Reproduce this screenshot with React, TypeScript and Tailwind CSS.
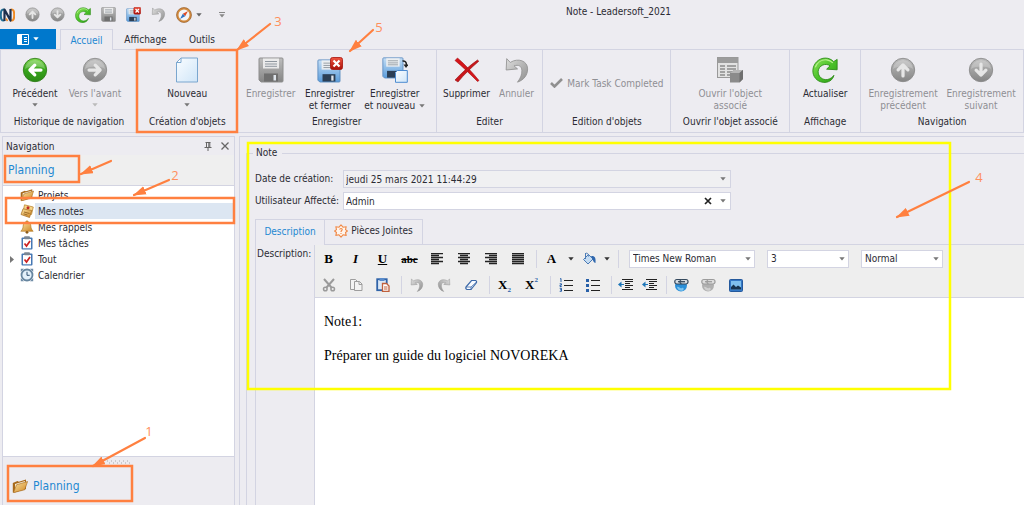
import React from "react";

type IconProps = { className?: string };

/* ---------- shared gradients ---------- */
function Gradients() {
  return (
    <svg className="absolute size-0" aria-hidden="true">
      <defs>
        <linearGradient id="green" x1="0" y1="0" x2="0" y2="1">
          <stop offset="0" stopColor="#86d957" />
          <stop offset="0.5" stopColor="#37a51c" />
          <stop offset="1" stopColor="#2b8a14" />
        </linearGradient>
        <linearGradient id="lime" x1="0" y1="0" x2="1" y2="1">
          <stop offset="0" stopColor="#8ee35c" />
          <stop offset="0.5" stopColor="#4cc32a" />
          <stop offset="1" stopColor="#2b9a14" />
        </linearGradient>
        <linearGradient id="grey" x1="0" y1="0" x2="0" y2="1">
          <stop offset="0" stopColor="#bdbdbd" />
          <stop offset="1" stopColor="#858585" />
        </linearGradient>
        <linearGradient id="silver" x1="0" y1="0" x2="1" y2="1">
          <stop offset="0" stopColor="#dedede" />
          <stop offset="1" stopColor="#8e8e8e" />
        </linearGradient>
        <linearGradient id="sky" x1="0" y1="0" x2="0" y2="1">
          <stop offset="0" stopColor="#c4def5" />
          <stop offset="1" stopColor="#5a9cdb" />
        </linearGradient>
        <linearGradient id="paper" x1="0" y1="0" x2="1" y2="1">
          <stop offset="0" stopColor="#fafdff" />
          <stop offset="1" stopColor="#cfe5f8" />
        </linearGradient>
        <linearGradient id="red" x1="0" y1="0" x2="0" y2="1">
          <stop offset="0" stopColor="#f0533f" />
          <stop offset="1" stopColor="#a80f08" />
        </linearGradient>
        <linearGradient id="gold" x1="0" y1="0" x2="1" y2="1">
          <stop offset="0" stopColor="#fbe3a2" />
          <stop offset="1" stopColor="#cf8420" />
        </linearGradient>
      </defs>
    </svg>
  );
}

/* ---------- icons ---------- */
const arrowTurns = { right: "rotate(0 12 12)", down: "rotate(90 12 12)", left: "rotate(180 12 12)", up: "rotate(270 12 12)" };

function CircleArrow({ dir, green, className = "size-[26px]" }: IconProps & { dir: keyof typeof arrowTurns; green?: boolean }) {
  return (
    <svg viewBox="0 0 24 24" className={className}>
      <circle cx="12" cy="12" r="10.8" fill={green ? "url(#green)" : "url(#grey)"} stroke={green ? "#2e7d17" : "#8a8a8a"} strokeWidth="0.8" />
      <path d="M2.6 11a9.5 9.5 0 0 1 18.8 0c-5-3-13-3-18.8 0z" fill="#fff" opacity="0.22" />
      <path
        d="M6.500 12h10M12.200 7.500 16.700 12l-4.500 4.500"
        transform={arrowTurns[dir]}
        fill="none"
        stroke={green ? "#fff" : "#e6e6e6"}
        strokeWidth="3"
        strokeLinecap="round"
        strokeLinejoin="round"
      />
    </svg>
  );
}

function RefreshIcon({ className = "size-[26px]" }: IconProps) {
  return (
    <svg viewBox="0 0 24 24" className={className}>
      <path
        d="M23.2 2.2v9.6l-9.7-.6 3.2-3.1C12.6 5.200 6.200 7.600 5.700 13.200c-.3 4.700 3.900 8.600 8.900 7.500 2.300-.5 4.200-1.900 5.600-3.800-.9 4.500-5.300 7-9.900 6.500C4.500 22.700.5 18 .8 12.300 1.200 5.900 6.300 1 12.300 1c3 0 5.700 1.200 7.700 3.300z"
        fill="url(#lime)"
        stroke="#2a8a14"
        strokeWidth="0.8"
      />
      <path d="M3 9.500C5 4.500 9.500 2.300 13.500 2.600c2.200.2 4.200 1.200 5.800 2.900" fill="none" stroke="#b7f08e" strokeWidth="1.100" />
    </svg>
  );
}

function Floppy({ grey, badge, className = "size-[26px]" }: IconProps & { grey?: boolean; badge?: "close" | "new" }) {
  const body = grey ? "url(#grey)" : "url(#sky)";
  const dark = grey ? "#6f6f6f" : "#2c3f55";
  const edge = grey ? "#8f8f8f" : "#5a8cc0";
  return (
    <svg viewBox="0 0 26 26" className={className}>
      {badge === "new" ? (
        <g transform="scale(0.84)">
          <FloppyBody body={body} dark={dark} edge={edge} />
        </g>
      ) : (
        <g transform={badge === "close" ? "translate(0 2) scale(0.92)" : undefined}>
          <FloppyBody body={body} dark={dark} edge={edge} />
        </g>
      )}
      {badge === "close" && (
        <g>
          <rect x="13.500" y="0.500" width="12" height="12" rx="2" fill="url(#red)" stroke="#a6120a" strokeWidth="0.8" />
          <path d="M16.500 3.500l6 6M22.500 3.500l-6 6" stroke="#fff" strokeWidth="2.200" />
        </g>
      )}
      {badge === "new" && (
        <g>
          <path d="M15.500 13.500h9.800v11.800H13.500V15.500z" fill="url(#paper)" stroke="#4d8bd0" />
          <path d="M20.500 4c2.500-.2 4 .8 3.900 4" fill="none" stroke="#222" strokeWidth="1.600" />
          <path d="M21.500 7.500h5l-2.500 3.500z" fill="#222" />
        </g>
      )}
    </svg>
  );
}

function FloppyBody({ body, dark, edge }: { body: string; dark: string; edge: string }) {
  return (
    <g>
      <path d="M2 1h22a1 1 0 0 1 1 1v22a1 1 0 0 1-1 1H3l-2-2V2a1 1 0 0 1 1-1z" fill={body} stroke={edge} />
      <rect x="5" y="1.500" width="16" height="10" fill="#f1f1f1" opacity="0.9" />
      <path d="M7 4.500h12M7 7h12M7 9.300h12" stroke="#8f979f" strokeWidth="1" />
      <rect x="6" y="16.500" width="14" height="8" fill={dark} />
      <rect x="15.500" y="18" width="2.500" height="5.500" fill="#dfe5ec" />
    </g>
  );
}

function UndoIcon({ className = "size-[26px]", flip }: IconProps & { flip?: boolean }) {
  return (
    <svg viewBox="0 0 24 24" className={className}>
      <path
        transform={flip ? "matrix(-1 0 0 1 24 0)" : undefined}
        d="M2.500 1.500 2 12l10.500-1-3.200-2.800c4-1.400 7 .2 7.200 4 .2 3.700-1 7-4 11 6-2 9.300-6.700 9.300-12.200C21.800 3.500 13 .5 5.800 5z"
        fill="url(#silver)"
        stroke="#929292"
        strokeWidth="0.8"
      />
    </svg>
  );
}

function LogoIcon() {
  return (
    <svg viewBox="0 0 15 14" className="h-[14px] w-[15px]">
      <path d="M4.500 1.700C1.500 1 .8 3 .8 7s.7 6 3.700 5.300" fill="none" stroke="#1f6f96" strokeWidth="2" />
      <path d="M10.500 1.700c3-.7 3.700 1.300 3.700 5.300s-.7 6-3.700 5.300" fill="none" stroke="#f08a24" strokeWidth="2" />
      <path d="M4.500 13V1.500L10.500 12.500V1" fill="none" stroke="#1b2f4d" strokeWidth="2.200" strokeLinejoin="round" />
      <path d="M7.500 13 6 10.500" stroke="#f08a24" strokeWidth="1.500" />
    </svg>
  );
}

function CompassIcon() {
  return (
    <svg viewBox="0 0 16 16" className="size-[16px]">
      <circle cx="8" cy="8" r="6.500" fill="#f3f5f8" stroke="#d28a3e" strokeWidth="2" />
      <circle cx="8" cy="8" r="7.500" fill="none" stroke="#8c531e" strokeWidth="0.6" />
      <path d="M12 4 9.200 9.200 6.800 6.800z" fill="#df4d26" />
      <path d="M4 12l2.800-5.200 2.400 2.400z" fill="#2f74c4" />
    </svg>
  );
}

function NewPageIcon() {
  return (
    <svg viewBox="0 0 24 26" className="h-[26px] w-[24px]">
      <path d="M6 1h16.500v24h-21V5.500z" fill="url(#paper)" stroke="#7aa6cf" />
      <path d="M1.500 5.500H6V1z" fill="#fff" stroke="#7aa6cf" />
    </svg>
  );
}

function DeleteIcon() {
  return (
    <svg viewBox="0 0 26 26" className="size-[26px]">
      <path d="M1 3.500 3.500 1C11 7.500 18 15 25 23.500l-1.500 1C16 17 9 10 1 3.500z" fill="#d4141a" stroke="#a60f12" strokeWidth="0.6" />
      <path d="M23.500 3l1.300 1.200C17 11 10 17.500 4 25L1 23C8 15.500 15 9 23.500 3z" fill="#c9161b" stroke="#941013" strokeWidth="0.6" />
    </svg>
  );
}

function LinkedObjectIcon() {
  return (
    <svg viewBox="0 0 26 26" className="size-[26px]">
      <rect x="0.500" y="0.500" width="20.500" height="20" fill="#e2e2e2" stroke="#999" />
      <rect x="1" y="1" width="20" height="5" fill="#9c9c9c" />
      <path d="M3 9h5M10 9h9M3 12h5M10 12h9M3 15h5M10 15h9M3 18h5M10 18h4" stroke="#8c8c8c" strokeWidth="1.400" />
      <path d="M13 16l4-3h9v9l-3.500 3.500H13z" fill="#8b8b8b" />
      <path d="M13 16l4-3h9l-3.500 3z" fill="#b7b7b7" />
      <path d="M26 13v9l-3.500 3.500V16z" fill="#6f6f6f" />
    </svg>
  );
}

function FolderIcon({ className = "size-[14px]" }: IconProps) {
  return (
    <svg viewBox="0 0 16 14" className={className}>
      <path d="M.8 4 5.500 2l1.300.8L14 .5V10L3 13.500H.8z" fill="#a86a1c" />
      <path d="M3 5 13 2v7L3 12z" fill="#f5ecd6" />
      <path d="M4.500 5.800 15.600 2.500 12.700 10.800 1.500 13.600z" fill="url(#gold)" stroke="#a8691e" strokeWidth="0.6" />
    </svg>
  );
}

function NoteIcon() {
  return (
    <svg viewBox="0 0 14 14" className="size-[14px]">
      <path d="M4.500.8 13.300 3 11.500 10.500 3 8z" fill="#f7d588" stroke="#b27c28" strokeWidth="0.7" />
      <path d="M3 4.800 11.800 6.500 9.500 13.500 1 10.500z" fill="url(#gold)" stroke="#a36c20" strokeWidth="0.7" />
      <path d="M4 8l5.500 1.500M3.500 9.800l4 1.200" stroke="#8b5a1b" strokeWidth="0.8" />
      <circle cx="8" cy="3.800" r="1.500" fill="#bf2a22" />
    </svg>
  );
}

function BellIcon() {
  return (
    <svg viewBox="0 0 14 14" className="size-[14px]">
      <circle cx="7" cy="1.800" r="1.300" fill="#c98a2a" />
      <path d="M7 1.800c3 0 3.700 2.200 3.900 4.700.1 2 .8 3.300 2.300 4.700H.8c1.500-1.400 2.200-2.700 2.300-4.700.2-2.500.9-4.700 3.900-4.700z" fill="url(#gold)" stroke="#b27a22" strokeWidth="0.7" />
      <circle cx="7" cy="12.300" r="1.400" fill="#8d5a16" />
    </svg>
  );
}

function TaskIcon() {
  return (
    <svg viewBox="0 0 14 14" className="size-[14px]">
      <rect x="1.500" y="1.500" width="11" height="12" rx="1" fill="#4678b4" />
      <rect x="3" y="3" width="8" height="9.300" fill="#fff" />
      <rect x="4" y="0.300" width="6" height="3" rx="1" fill="#7b8794" />
      <path d="M4.500 7.500 6.500 10 10 5" fill="none" stroke="#cc2222" strokeWidth="1.700" />
    </svg>
  );
}

function ClockIcon() {
  return (
    <svg viewBox="0 0 14 14" className="size-[14px]">
      <path d="M.8 4V.8H4zM13.200 4V.8H10zM.8 10v3.200H4zM13.200 10v3.200H10z" fill="#6f8ca6" />
      <circle cx="7" cy="7" r="5.500" fill="#e3f0fa" stroke="#66859f" strokeWidth="1.800" />
      <path d="M7 3.800V7.300h2.700" fill="none" stroke="#2d4f70" />
    </svg>
  );
}

function GearAlertIcon() {
  return (
    <svg viewBox="0 0 14 14" className="size-[14px]">
      <path d="M7 .9 9 3.200l3.200-.5-.7 2.900L13.400 7l-1.900 1.500.7 2.900-3.200-.6L7 13.100l-2-2.300-3.200.6.7-2.900L.6 7l1.900-1.400-.7-2.900 3.200.5z" fill="#fff5ed" stroke="#f08a48" strokeWidth="1.100" strokeLinejoin="round" />
      <path d="M5.700 5.600c.2-1.500 2.700-1.300 2.500.1C8.100 6.500 7 6.600 7 7.900M7 9v1" fill="none" stroke="#f08a48" strokeWidth="1.100" />
    </svg>
  );
}

function Caret({ className = "text-[#666]" }: IconProps) {
  return (
    <svg viewBox="0 0 6 4" className={"h-[4px] w-[6px] shrink-0 " + className}>
      <path d="M.3.300h5.400L3 3.500z" fill="currentColor" />
    </svg>
  );
}

const alignLines = {
  left: "M0 .5h12M0 2.500h8M0 4.500h12M0 6.500h8M0 8.500h12M0 10.500h8",
  center: "M0 .5h12M2 2.500h8M0 4.500h12M2 6.500h8M0 8.500h12M2 10.500h8",
  right: "M0 .5h12M4 2.500h8M0 4.500h12M4 6.500h8M0 8.500h12M4 10.500h8",
  justify: "M0 .5h12M0 2.500h12M0 4.500h12M0 6.500h12M0 8.500h12M0 10.500h12",
};

function AlignIcon({ kind }: { kind: keyof typeof alignLines }) {
  return (
    <svg viewBox="0 0 12 12" className="size-[12px]">
      <path d={alignLines[kind]} stroke="#222" strokeWidth="1.300" />
    </svg>
  );
}

function BucketIcon() {
  return (
    <svg viewBox="0 0 14 14" className="size-[14px]">
      <path d="M1.500 7.500 6.500 2.500 11 7 6 12z" fill="#c5dcf2" stroke="#4a7ab5" />
      <path d="M3.500 1v6M3.500 1.500c2-1 3 .5 3 3" fill="none" stroke="#4a7ab5" />
      <path d="M9 4c4-.5 5 2 4.500 7-1.700-.5-2.600-2.300-3-4z" fill="#2f67ad" />
    </svg>
  );
}

function CutIcon() {
  return (
    <svg viewBox="0 0 14 14" className="size-[14px]" fill="none" stroke="#9a9a9a" strokeWidth="1.500">
      <path d="M2 1l7.500 8.500M12 1 4.500 9.500" strokeWidth="2" />
      <circle cx="3.300" cy="11" r="1.800" />
      <circle cx="10.700" cy="11" r="1.800" />
    </svg>
  );
}

function CopyIcon() {
  return (
    <svg viewBox="0 0 14 14" className="size-[14px]" fill="#f3f3f3" stroke="#9d9d9d">
      <path d="M1.500 1.500h5L9 4v7.500H1.500z" />
      <path d="M5.500 3.500h5l2.500 2.500v6.500H5.500z" />
      <path d="M10 3.500V6.500h3" fill="none" />
    </svg>
  );
}

function PasteIcon() {
  return (
    <svg viewBox="0 0 14 14" className="size-[14px]">
      <rect x="1.200" y="1.200" width="9.500" height="11" fill="#dce8f5" stroke="#2f63a8" strokeWidth="1.800" />
      <rect x="3.500" y="0" width="5" height="3" fill="#5a8ccb" />
      <path d="M6.500 5.500h4l2.500 2.500v5.500H6.500z" fill="#fff" stroke="#c0603c" strokeWidth="1.300" />
      <path d="M8 9h3.500M8 11h3.500" stroke="#c0603c" />
    </svg>
  );
}

function EraserIcon() {
  return (
    <svg viewBox="0 0 14 14" className="size-[14px]">
      <path d="M2 9 7.500 2.500h4.200q1.500.8.500 2.500L7 11.500H3Q1.200 10.800 2 9z" fill="#f8fbff" stroke="#3c69a8" strokeWidth="1.200" />
      <path d="M7 11.500 7 9 12.500 4M2 9H7" fill="none" stroke="#3c69a8" strokeWidth="0.8" />
    </svg>
  );
}

function ListIcon({ numbered }: { numbered?: boolean }) {
  return (
    <svg viewBox="0 0 14 14" className="size-[14px]">
      <path d="M5 2.500h9M5 7.500h9M5 12.500h9" stroke="#222" strokeWidth="1.200" />
      {numbered ? (
        <path d="M1 1l1-.5v3.500M.7 5.800h1.800v1.300H1v1.400h1.700M.7 10.300h1.800v3H.7M1 11.800h1.500" fill="none" stroke="#2860a8" />
      ) : (
        <path d="M0 1h3v3H0zM0 6h3v3H0zM0 11h3v3H0z" fill="#2860a8" />
      )}
    </svg>
  );
}

function DentIcon() {
  return (
    <svg viewBox="0 0 15 12" className="h-[12px] w-[15px]">
      <path d="M4 .5h11M7 2.500h8M7 4.500h5M7 6.500h8M7 8.500h5M4 10.500h11" stroke="#222" strokeWidth="1.200" />
      <path d="M3.500 2.500v6L0 5.500z" fill="#1c75b8" />
      <path d="M3 5.500h3" stroke="#1c75b8" />
    </svg>
  );
}

function LinkGlobeIcon({ grey }: { grey?: boolean }) {
  const chain = grey ? "#9b9b9b" : "#34485c";
  return (
    <svg viewBox="0 0 15 14" className="h-[14px] w-[15px]">
      <circle cx="7" cy="7.500" r="6" fill={grey ? "#b0b0b0" : "#2a8fd8"} />
      <path d="M3 9c2-1 3 2 5 1s2 2 1 2.500c-3 .7-5.500-.5-6-3.500z" fill={grey ? "#cfcfcf" : "#7cc4f0"} />
      <rect x="0.800" y="1.500" width="8" height="4.500" rx="2" fill={grey ? "#ddd" : "#d5dce2"} stroke={chain} strokeWidth="1.200" />
      <rect x="6" y="1.500" width="8" height="4.500" rx="2" fill={grey ? "#ddd" : "#d5dce2"} stroke={chain} strokeWidth="1.200" />
      <path d="M4 3.700h7" stroke={chain} strokeWidth="1.300" />
    </svg>
  );
}

function PictureIcon() {
  return (
    <svg viewBox="0 0 14 13" className="h-[13px] w-[14px]">
      <rect x="0.500" y="0.500" width="13" height="12" rx="1" fill="#3579c6" stroke="#24599c" />
      <rect x="2" y="2" width="10" height="8.500" fill="#7fc0ee" />
      <path d="M2 10.500V8l2.500-2.500L7 8l2-1.500 3 2v2z" fill="#17344f" />
    </svg>
  );
}

function MenuIcon() {
  return (
    <svg viewBox="0 0 12 11" className="h-[11px] w-[12px]">
      <path d="M.5.500h11v10H.5z" fill="none" stroke="#fff" />
      <path d="M1 1h4v9H1z" fill="#fff" />
      <path d="M7 3.500h3M7 5.500h3M7 7.500h3" stroke="#fff" />
    </svg>
  );
}

/* ---------- ribbon ---------- */
function RibbonButton({ icon, label, disabled, caret, className }: { icon: React.ReactNode; label: React.ReactNode; disabled?: boolean; caret?: boolean; className: string }) {
  return (
    <button
      type="button"
      disabled={disabled}
      className={"flex flex-col items-center whitespace-nowrap text-center leading-[12px] disabled:text-[#8f8f94] " + className}
    >
      {icon}
      <span className="mt-[5px]">{label}</span>
      {caret && <Caret className={disabled ? "mt-[3px] text-[#bbb]" : "mt-[3px] text-[#777]"} />}
    </button>
  );
}

function RibbonGroup({ title, start, children }: { title: string; start?: boolean; children: React.ReactNode }) {
  return (
    <section className="flex min-w-0 flex-col border-r border-[#d3d4e2]">
      <div className={"flex flex-1 pt-[7px] " + (start ? "pl-[4px]" : "justify-center")}>{children}</div>
      <h2 className="whitespace-nowrap pb-[3px] text-center leading-[14px]">{title}</h2>
    </section>
  );
}

/* ---------- navigation ---------- */
const treeItems = [
  { label: "Projets", icon: <FolderIcon /> },
  { label: "Mes notes", icon: <NoteIcon />, selected: true },
  { label: "Mes rappels", icon: <BellIcon /> },
  { label: "Mes tâches", icon: <TaskIcon /> },
  { label: "Tout", icon: <TaskIcon />, branch: true },
  { label: "Calendrier", icon: <ClockIcon /> },
];

function NavigationPane() {
  return (
    <aside className="ml-[2px] mt-[3px] flex w-[233px] shrink-0 flex-col border-x border-t border-[#d3d4e2]">
      <header className="flex h-[18px] items-center pl-[3px] pr-[5px]">
        <span className="flex-1">Navigation</span>
        <button type="button" aria-label="Épingler" className="mr-[9px]">
          <svg viewBox="0 0 8 9" className="h-[9px] w-[8px]">
            <path d="M1.500.500h5M2.500.500v5M4.800.500v5M5.800.500v5M.5 5.500h7M4 5.500V9" stroke="#666" />
          </svg>
        </button>
        <button type="button" aria-label="Fermer">
          <svg viewBox="0 0 8 8" className="size-[8px]">
            <path d="M.500.500l7 7M7.500.500l-7 7" stroke="#666" strokeWidth="1.300" />
          </svg>
        </button>
      </header>
      <h2 className="flex h-[31px] items-center border-b border-[#d3d4e2] bg-[#efefef] pl-[5px] text-[12px] text-[#1e88d2]">Planning</h2>
      <ul className="flex-1 border-b border-[#d3d4e2] bg-white pt-px">
        {treeItems.map((item) => (
          <li key={item.label}>
            <button type="button" className="flex h-4 w-full items-center text-left">
              <span className="flex w-[17px] shrink-0 justify-center">
                {item.branch && (
                  <svg viewBox="0 0 4 7" className="h-[7px] w-[4px]">
                    <path d="M0 0l4 3.500L0 7z" fill="#777" />
                  </svg>
                )}
              </span>
              {item.icon}
              <span className={"ml-px flex h-4 flex-1 items-center pl-[3px] " + (item.selected ? "bg-[#dce6f2]" : "")}>{item.label}</span>
            </button>
          </li>
        ))}
      </ul>
      <footer className="h-[48px]">
        <div className="flex h-[10px] items-center justify-center">
          <svg viewBox="0 0 24 4" className="h-[4px] w-[24px]">
            <path d="M0 1h24" stroke="#aaa" strokeDasharray="1 3" />
            <path d="M2 3h22" stroke="#aaa" strokeDasharray="1 3" />
          </svg>
        </div>
        <button type="button" className="flex h-[38px] w-full items-center gap-[5px] pl-[9px] text-[12px] text-[#1e88d2]">
          <FolderIcon className="h-[14px] w-[16px]" />
          Planning
        </button>
      </footer>
    </aside>
  );
}

/* ---------- editor ---------- */
function Tool({ label, wide = "w-[27px]", children }: { label: string; wide?: string; children: React.ReactNode }) {
  return (
    <button type="button" aria-label={label} className={"flex h-[18px] shrink-0 items-center justify-center font-['Liberation_Serif',serif] text-[13px] font-bold text-black " + wide}>
      {children}
    </button>
  );
}

function Separator() {
  return <span className="ml-[5px] mr-px h-[18px] w-px shrink-0 bg-[#d3d4e2]" />;
}

function Picker({ label, value, className }: { label: string; value: string; className: string }) {
  return (
    <div className={"relative h-[18px] shrink-0 " + className}>
      <select aria-label={label} defaultValue={value} className="h-full w-full appearance-none border border-[#d3d4e2] bg-white pl-[3px] leading-[16px]">
        <option>{value}</option>
      </select>
      <Caret className="pointer-events-none absolute right-[4px] top-[7px] text-[#777]" />
    </div>
  );
}

function Toolbar() {
  return (
    <div className="flex flex-col gap-[8px] border-b border-[#d3d4e2] bg-[#eeeeee] pb-[3px] pt-[5px]">
      <div className="flex items-center">
        <Tool label="Gras">B</Tool>
        <Tool label="Italique"><i>I</i></Tool>
        <Tool label="Souligné"><u>U</u></Tool>
        <Tool label="Barré"><s className="text-[11px]">abc</s></Tool>
        <Tool label="Aligner à gauche"><AlignIcon kind="left" /></Tool>
        <Tool label="Centrer"><AlignIcon kind="center" /></Tool>
        <Tool label="Aligner à droite"><AlignIcon kind="right" /></Tool>
        <Tool label="Justifier"><AlignIcon kind="justify" /></Tool>
        <Separator />
        <Tool label="Couleur du texte">A</Tool>
        <Tool label="Choisir la couleur du texte" wide="w-[12px]"><Caret className="text-[#333]" /></Tool>
        <Tool label="Couleur de fond" wide="w-[24px]"><BucketIcon /></Tool>
        <Tool label="Choisir la couleur de fond" wide="w-[12px]"><Caret className="text-[#333]" /></Tool>
        <Separator />
        <Picker label="Police" value="Times New Roman" className="ml-[9px] w-[126px]" />
        <Picker label="Taille" value="3" className="ml-[12px] w-[82px]" />
        <Picker label="Style" value="Normal" className="ml-[12px] w-[82px]" />
      </div>
      <div className="flex items-center">
        <Tool label="Couper"><CutIcon /></Tool>
        <Tool label="Copier"><CopyIcon /></Tool>
        <Tool label="Coller"><PasteIcon /></Tool>
        <Separator />
        <Tool label="Annuler"><UndoIcon className="size-[14px]" /></Tool>
        <Tool label="Rétablir"><UndoIcon className="size-[14px]" flip /></Tool>
        <Tool label="Effacer"><EraserIcon /></Tool>
        <Separator />
        <Tool label="Indice">
          <span>X</span>
          <span className="self-end text-[7px] leading-[8px] text-[#2860a8]">2</span>
        </Tool>
        <Tool label="Exposant">
          <span>X</span>
          <span className="self-start text-[7px] leading-[8px] text-[#2860a8]">2</span>
        </Tool>
        <Separator />
        <Tool label="Liste numérotée"><ListIcon numbered /></Tool>
        <Tool label="Liste à puces"><ListIcon /></Tool>
        <Separator />
        <Tool label="Diminuer le retrait" wide="w-[24px]"><DentIcon /></Tool>
        <Tool label="Augmenter le retrait" wide="w-[24px]"><DentIcon /></Tool>
        <Separator />
        <Tool label="Insérer un lien"><LinkGlobeIcon /></Tool>
        <Tool label="Supprimer le lien"><LinkGlobeIcon grey /></Tool>
        <Tool label="Insérer une image"><PictureIcon /></Tool>
      </div>
    </div>
  );
}

function NoteForm() {
  return (
    <main className="ml-[4px] mt-[3px] flex min-w-0 flex-1 flex-col border-l border-t border-[#d3d4e2] pl-[6px] pt-[8px]">
      <fieldset className="flex min-w-0 flex-1 flex-col border-l border-t border-[#d3d4e2] pl-[8px]">
        <legend className="ml-[-2px] pl-[3px] pr-[5px] leading-[16px]">Note</legend>
        <div className="mt-[9px] grid w-[476px] grid-cols-[88px_1fr] gap-y-[4px]">
          <label htmlFor="date" className="whitespace-nowrap leading-[18px]">Date de création:</label>
          <div className="flex h-[18px] items-center border border-[#d3d4e2] bg-[#f0f0f2] pr-[4px]">
            <input id="date" readOnly defaultValue="jeudi 25 mars 2021 11:44:29" className="min-w-0 flex-1 bg-transparent pl-[2px] outline-none" />
            <Caret className="text-[#777]" />
          </div>
          <label htmlFor="user" className="whitespace-nowrap leading-[18px]">Utilisateur Affecté:</label>
          <div className="flex h-[18px] items-center border border-[#d3d4e2] bg-white pr-[4px]">
            <input id="user" defaultValue="Admin" className="min-w-0 flex-1 bg-transparent pl-[2px] outline-none" />
            <button type="button" aria-label="Vider" className="mr-[8px]">
              <svg viewBox="0 0 8 8" className="size-[8px]">
                <path d="M1 1l6 6M7 1 1 7" stroke="#222" strokeWidth="1.700" />
              </svg>
            </button>
            <Caret className="text-[#777]" />
          </div>
        </div>
        <div className="mt-[9px] flex h-[26px]" role="tablist">
          <button type="button" role="tab" aria-selected="true" className="w-[70px] border-x border-t border-[#d3d4e2] pb-[3px] text-[#1e88d2]">Description</button>
          <button type="button" role="tab" aria-selected="false" className="flex w-[98px] items-center justify-center gap-[3px] whitespace-nowrap border-y border-r border-[#d3d4e2] pb-[3px]">
            <GearAlertIcon />
            Pièces Jointes
          </button>
          <span className="flex-1 border-b border-[#d3d4e2]" />
        </div>
        <div className="flex flex-1 border-l border-[#d3d4e2]">
          <label htmlFor="body" className="w-[58px] shrink-0 whitespace-nowrap pl-px pt-px leading-[16px]">Description:</label>
          <div className="flex min-w-0 flex-1 flex-col border-l border-[#d3d4e2]">
            <Toolbar />
            <div id="body" role="textbox" contentEditable suppressContentEditableWarning aria-label="Description" className="flex-1 bg-white px-[9px] pt-[15px] font-['Liberation_Serif',serif] text-[14px] leading-[17px] text-black outline-none">
              <p>Note1:</p>
              <p className="mt-[17px]">Préparer un guide du logiciel NOVOREKA</p>
            </div>
          </div>
        </div>
      </fieldset>
    </main>
  );
}

/* ---------- callouts drawn above the window ---------- */
const boxes = [
  { x: 137, y: 50, w: 100, h: 82 },
  { x: 5, y: 156, w: 74, h: 26 },
  { x: 6, y: 198, w: 228, h: 25 },
  { x: 8, y: 466, w: 124, h: 35 },
];

const arrows = [
  { x1: 145, y1: 438, x2: 93, y2: 466, n: "1", tx: 149, ty: 436 },
  { x1: 169, y1: 180, x2: 134, y2: 195, n: "2", tx: 175, ty: 180 },
  { x1: 270, y1: 24, x2: 237, y2: 50, n: "3", tx: 278, ty: 26 },
  { x1: 969, y1: 182, x2: 897, y2: 217, n: "4", tx: 979, ty: 182 },
  { x1: 373, y1: 30, x2: 350, y2: 51, n: "5", tx: 379, ty: 32 },
  { x1: 111, y1: 161, x2: 81, y2: 174, n: "", tx: 0, ty: 0 },
];

function Callouts() {
  return (
    <svg viewBox="0 0 1024 505" className="pointer-events-none absolute left-0 top-0 z-20 h-[505px] w-[1024px]">
      <defs>
        <marker id="head" viewBox="0 0 12 8" refX="11" refY="4" markerWidth="13" markerHeight="9" markerUnits="userSpaceOnUse" orient="auto">
          <path d="M0 0l12 4-12 4z" fill="#ff8040" />
        </marker>
      </defs>
      <rect x="248" y="143" width="702" height="246" fill="none" stroke="#ffff00" strokeWidth="2.500" />
      {boxes.map((b) => (
        <rect key={b.y} x={b.x} y={b.y} width={b.w} height={b.h} fill="none" stroke="#ff8040" strokeWidth="2.500" />
      ))}
      {arrows.map((a) => (
        <g key={a.x1}>
          <line x1={a.x1} y1={a.y1} x2={a.x2} y2={a.y2} stroke="#ff8040" strokeWidth="2.200" strokeLinecap="round" markerEnd="url(#head)" />
          {a.n && (
            <text x={a.tx} y={a.ty} textAnchor="middle" className="fill-[#ff8f5c] font-['Open_Sans',sans-serif] text-[13px]">{a.n}</text>
          )}
        </g>
      ))}
    </svg>
  );
}

export default function App() {
  return (
    <div className="relative flex min-h-screen flex-col overflow-hidden bg-[#edecf1] font-['DejaVu_Sans_Condensed','Noto_Sans',sans-serif] text-[10px] text-[#2b2b33]">
      <Gradients />
      <header className="flex h-[29px] shrink-0 items-center">
        <div className="flex items-center gap-[10px]">
          <LogoIcon />
          <button type="button" aria-label="Précédent"><CircleArrow dir="up" className="size-[15px]" /></button>
          <button type="button" aria-label="Suivant"><CircleArrow dir="down" className="size-[15px]" /></button>
          <button type="button" aria-label="Actualiser"><RefreshIcon className="size-[16px]" /></button>
          <button type="button" aria-label="Enregistrer"><Floppy grey className="size-[15px]" /></button>
          <button type="button" aria-label="Enregistrer et fermer"><Floppy badge="close" className="size-[15px]" /></button>
          <button type="button" aria-label="Annuler"><UndoIcon className="size-[15px]" /></button>
          <button type="button" aria-label="Navigateur" className="flex items-center gap-[4px]"><CompassIcon /><Caret /></button>
          <button type="button" aria-label="Personnaliser" className="ml-[7px] flex flex-col items-center gap-px">
            <span className="h-px w-[6px] bg-[#888]" />
            <Caret className="text-[#888]" />
          </button>
        </div>
        <h1 className="flex-1 pb-[6px] pr-[12px] text-center">Note - Leadersoft_2021</h1>
      </header>
      <nav className="relative z-10 flex h-[20px] shrink-0 items-stretch">
        <button type="button" aria-label="Fichier" className="flex w-[56px] items-center justify-center gap-[4px] bg-[#0078cc]">
          <MenuIcon />
          <Caret className="text-white" />
        </button>
        <button type="button" className="-mb-px ml-[4px] w-[53px] border-x border-t border-[#d3d4e2] bg-[#edecf1] text-[#1e88d2]">Accueil</button>
        <button type="button" className="w-[65px] pt-px">Affichage</button>
        <button type="button" className="w-[48px] pt-px">Outils</button>
      </nav>
      <div className="grid h-[84px] shrink-0 grid-cols-[137fr_100fr_199fr_107fr_128fr_119fr_71fr_163fr] border-y border-l border-[#d3d4e2]">
        <RibbonGroup title="Historique de navigation" start>
          <RibbonButton className="w-[60px]" icon={<CircleArrow dir="left" green />} label="Précédent" caret />
          <RibbonButton className="w-[60px]" icon={<CircleArrow dir="right" />} label="Vers l'avant" disabled caret />
        </RibbonGroup>
        <RibbonGroup title="Création d'objets">
          <RibbonButton className="w-[60px]" icon={<NewPageIcon />} label="Nouveau" caret />
        </RibbonGroup>
        <RibbonGroup title="Enregistrer" start>
          <RibbonButton className="w-[58px]" icon={<Floppy grey />} label="Enregistrer" disabled />
          <RibbonButton className="w-[60px]" icon={<Floppy badge="close" />} label={<>Enregistrer<br />et fermer</>} />
          <RibbonButton
            className="w-[70px]"
            icon={<Floppy badge="new" />}
            label={<>Enregistrer<br /><span className="flex items-center gap-[4px]">et nouveau <Caret className="text-[#777]" /></span></>}
          />
        </RibbonGroup>
        <RibbonGroup title="Editer">
          <RibbonButton className="w-[54px]" icon={<DeleteIcon />} label="Supprimer" />
          <RibbonButton className="w-[46px]" icon={<UndoIcon />} label="Annuler" disabled />
        </RibbonGroup>
        <RibbonGroup title="Edition d'objets">
          <button type="button" disabled className="mt-[17px] flex h-[18px] items-center gap-[4px] whitespace-nowrap text-[#8f8f94]">
            <svg viewBox="0 0 13 10" className="h-[10px] w-[13px]">
              <path d="M1 5l3.500 3.500L12 1" fill="none" stroke="#909090" strokeWidth="2.600" />
            </svg>
            Mark Task Completed
          </button>
        </RibbonGroup>
        <RibbonGroup title="Ouvrir l'objet associé">
          <RibbonButton className="w-[80px]" icon={<LinkedObjectIcon />} label={<>Ouvrir l'object<br />associé</>} disabled />
        </RibbonGroup>
        <RibbonGroup title="Affichage">
          <RibbonButton className="w-[60px]" icon={<RefreshIcon />} label="Actualiser" />
        </RibbonGroup>
        <RibbonGroup title="Navigation">
          <RibbonButton className="w-[78px]" icon={<CircleArrow dir="up" />} label={<>Enregistrement<br />précédent</>} disabled />
          <RibbonButton className="w-[78px]" icon={<CircleArrow dir="down" />} label={<>Enregistrement<br />suivant</>} disabled />
        </RibbonGroup>
      </div>
      <div className="flex flex-1">
        <NavigationPane />
        <NoteForm />
      </div>
      <Callouts />
    </div>
  );
}
